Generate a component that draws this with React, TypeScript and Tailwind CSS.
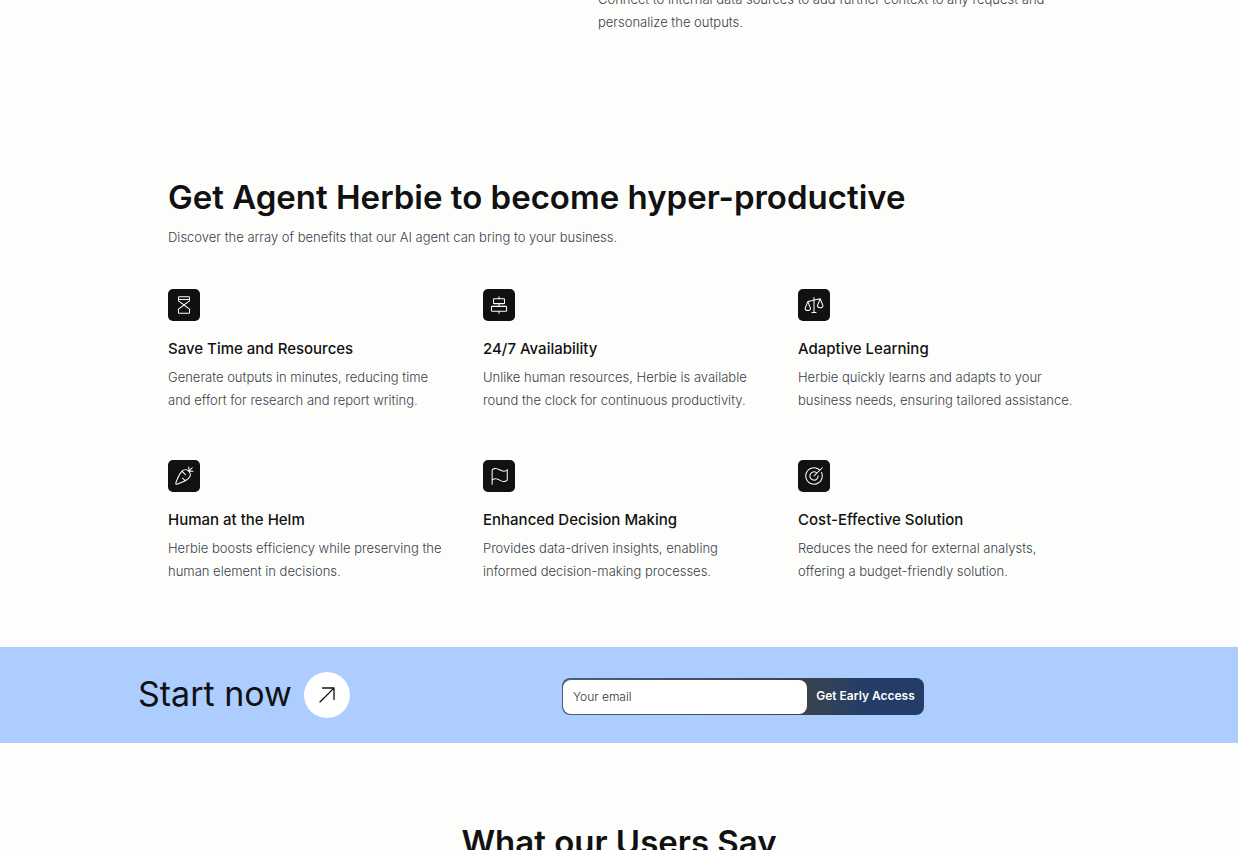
import {
  PiAlignCenterHorizontalLight,
  PiArrowUpRightLight,
  PiCarrotLight,
  PiFlagLight,
  PiHourglassHighLight,
  PiScalesLight,
  PiTargetLight,
} from 'react-icons/pi';

const benefits = [
  { icon: PiHourglassHighLight, title: 'Save Time and Resources', text: 'Generate outputs in minutes, reducing time\nand effort for research and report writing.' },
  { icon: PiAlignCenterHorizontalLight, title: '24/7 Availability', text: 'Unlike human resources, Herbie is available\nround the clock for continuous productivity.' },
  { icon: PiScalesLight, title: 'Adaptive Learning', text: 'Herbie quickly learns and adapts to your\nbusiness needs, ensuring tailored assistance.' },
  { icon: PiCarrotLight, title: 'Human at the Helm', text: 'Herbie boosts efficiency while preserving the\nhuman element in decisions.' },
  { icon: PiFlagLight, title: 'Enhanced Decision Making', text: 'Provides data-driven insights, enabling\ninformed decision-making processes.' },
  { icon: PiTargetLight, title: 'Cost-Effective Solution', text: 'Reduces the need for external analysts,\noffering a budget-friendly solution.' },
];

function Benefits() {
  return (
    <section className="mx-auto w-full max-w-[902px] pt-[140px] pb-16">
      <h2 className="text-[33px] leading-[46px] font-semibold">Get Agent Herbie to become hyper-productive</h2>
      <p className="mt-1.5 text-[13px] leading-[23px] font-light text-[#3a3f4a]">Discover the array of benefits that our AI agent can bring to your business.</p>
      <div className="mt-10 grid grid-cols-3 gap-x-[43px] gap-y-12">
        {benefits.map(({ icon: Icon, title, text }) => (
          <div key={title}>
            <div className="flex size-8 items-center justify-center rounded-[5px] bg-[#111]">
              <Icon className="size-[22px] text-white" />
            </div>
            <h3 className="mt-4 text-[15px] leading-6 font-medium">{title}</h3>
            <p className="mt-[5px] text-[13px] leading-[23px] font-light whitespace-pre text-[#3a3f4a]">{text}</p>
          </div>
        ))}
      </div>
    </section>
  );
}

function StartBanner() {
  return (
    <section className="bg-[#adcdff]">
      <div className="mx-auto flex h-24 w-full max-w-[962px] items-center">
        <div className="flex w-[424px] items-center gap-3">
          <span className="pb-1 text-[34px] whitespace-nowrap">Start now</span>
          <a href="#start" aria-label="Start now" className="flex size-[46px] items-center justify-center rounded-full bg-white">
            <PiArrowUpRightLight className="size-7" />
          </a>
        </div>
        <form className="mt-0.5 flex h-[37px] w-[362px] rounded-lg bg-linear-to-r from-[#4a5f80] via-[#38434f] via-68% to-[#233c68] to-85% pt-0.5 pb-px pl-px">
          <input type="email" aria-label="Your email" placeholder="Your email" className="w-[244px] rounded-lg bg-white px-2.5 text-xs font-light placeholder:text-[#333]" />
          <button type="button" className="flex-1 pb-0.5 text-xs font-semibold whitespace-nowrap text-white">Get Early Access</button>
        </form>
      </div>
    </section>
  );
}

export default function App() {
  return (
    <div className="flex h-screen flex-col overflow-hidden bg-[#fdfefc] font-['Inter',sans-serif] text-[#111] *:shrink-0">
      <section className="mx-auto -mt-3 w-full max-w-[902px] pl-[430px]">
        <p className="text-[13px] leading-[23px] font-light whitespace-pre-line text-[#3a3f4a]">{'Connect to internal data sources to add further context to any request and\npersonalize the outputs.'}</p>
      </section>
      <Benefits />
      <StartBanner />
      <section className="pt-[76px]">
        <h2 className="text-center text-[33px] leading-[46px] font-semibold">What our Users Say</h2>
      </section>
    </div>
  );
}
